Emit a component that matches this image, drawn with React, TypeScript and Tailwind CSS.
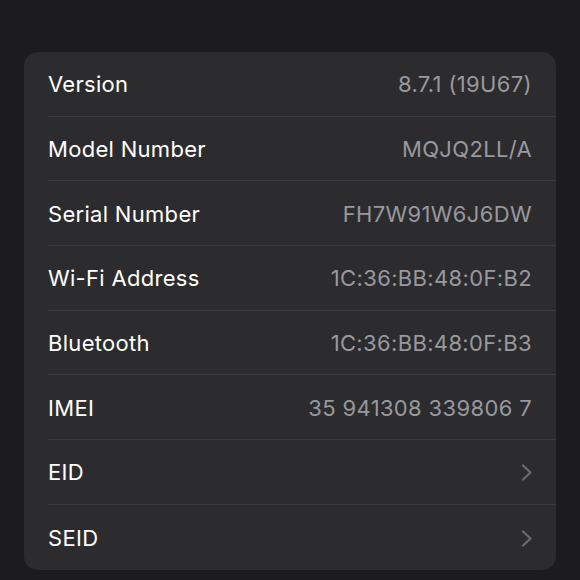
interface Row {
  label: string
  value?: string
  chevron?: boolean
}

const rows: Row[] = [
  { label: 'Version', value: '8.7.1 (19U67)' },
  { label: 'Model Number', value: 'MQJQ2LL/A' },
  { label: 'Serial Number', value: 'FH7W91W6J6DW' },
  { label: 'Wi-Fi Address', value: '1C:36:BB:48:0F:B2' },
  { label: 'Bluetooth', value: '1C:36:BB:48:0F:B3' },
  { label: 'IMEI', value: '35 941308 339806 7' },
  { label: 'EID', chevron: true },
  { label: 'SEID', chevron: true },
]

function Chevron() {
  return (
    <svg width="12" height="17" viewBox="0 0 12 17" fill="none" className="mr-[-1px]">
      <polyline
        points="2,1.5 9.5,8.5 2,15.5"
        stroke="#6b6b70"
        strokeWidth="2.2"
        strokeLinecap="round"
        strokeLinejoin="round"
      />
    </svg>
  )
}

export default function App() {
  return (
    <div
      className="w-[580px] h-[580px] bg-[#1c1c1e] pt-[52px] px-6 overflow-hidden"
      style={{ fontFamily: 'Inter, "Noto Sans", sans-serif' }}
    >
      <div className="bg-[#2c2c2e] rounded-[14px] pl-6">
        {rows.map((row, i) => (
          <div
            key={row.label}
            className={
              'flex items-center justify-between h-[64.7px] pr-6 pt-[2px] ' +
              (i < rows.length - 1 ? 'border-b border-[#3a3a3c]' : '')
            }
          >
            <span className="text-white text-[22px] tracking-[0.3px]">{row.label}</span>
            {row.value && (
              <span className="text-[#98989f] text-[22px] tracking-[0.35px]">{row.value}</span>
            )}
            {row.chevron && <Chevron />}
          </div>
        ))}
      </div>
    </div>
  )
}
